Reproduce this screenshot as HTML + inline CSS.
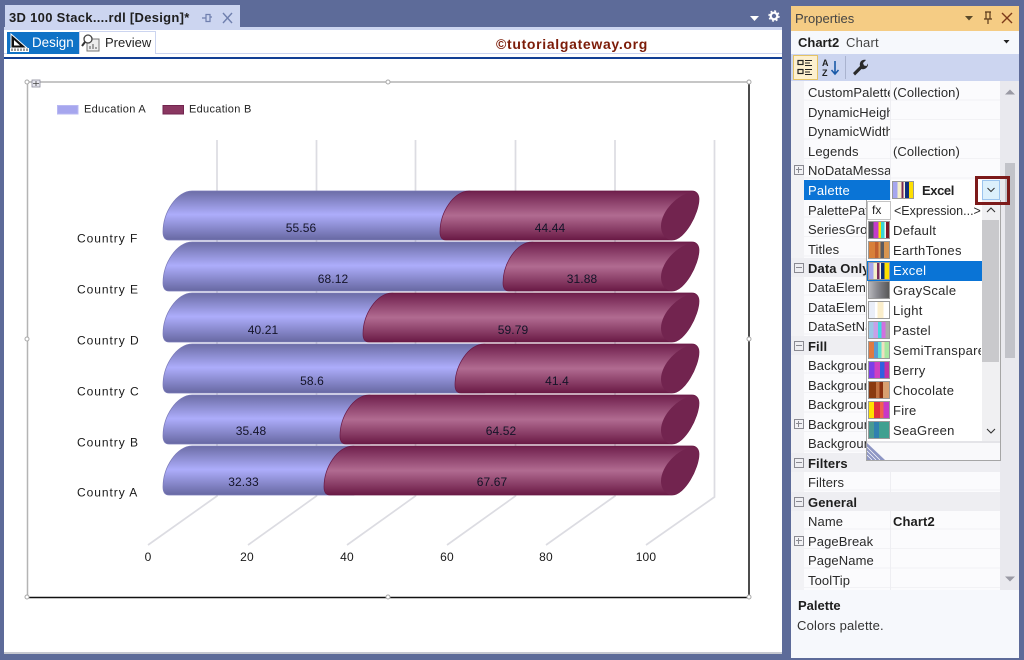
<!DOCTYPE html>
<html><head><meta charset="utf-8"><style>
html,body{margin:0;padding:0;width:1024px;height:660px;overflow:hidden;background:#5d6b99;font-family:"Liberation Sans",sans-serif;color:#1e1e1e}
div{position:absolute;box-sizing:border-box;white-space:nowrap;overflow:hidden}
svg{position:absolute;overflow:hidden}
.r{left:808px;width:82px;height:19px;font-size:13px;line-height:19px;letter-spacing:.1px;color:#2a2a2a}
.b{font-weight:bold;color:#1e1e1e}
.sec{left:791px;width:209px;height:19px;background:#eeeef2}
.pm{left:794px;width:10px;height:10px;border:1px solid #8a8a92}
.pm:before{content:"";position:absolute;left:1px;right:1px;top:3px;height:1px;background:#8a8a92}
.pl:after{content:"";position:absolute;top:1px;bottom:1px;left:3px;width:1px;background:#8a8a92}
.sw{left:868px;width:22px;height:18px;border:1px solid #9a9a9a}
.it{left:893px;width:88px;height:20px;font-size:13px;line-height:20px;letter-spacing:.3px;color:#2a2a2a}
</style></head><body>

<!-- Document tab -->
<div style="left:5px;top:5px;width:235px;height:22px;background:#ccd5f0"></div>
<div style="left:9px;top:9px;width:185px;height:18px;font-size:13px;font-weight:bold;line-height:18px;letter-spacing:.3px;color:#1e1e1e">3D 100 Stack....rdl [Design]*</div>
<svg style="left:200px;top:10px" width="36" height="16" viewBox="0 0 36 16" fill="none" stroke="#6f7fae" stroke-width="1.2"><path d="M2 8H6M6 4.5H10V11.5H6ZM6 4.5V11.5M10 7H12"/><path d="M23 3L32 13M32 3L23 13" stroke-width="1.4"/></svg>

<!-- Top-right icons -->
<svg style="left:745px;top:8px" width="38" height="18" viewBox="0 0 38 18"><path d="M5 8H14L9.500 13Z" fill="#fff"/><circle cx="29" cy="8" r="3.300" fill="none" stroke="#fff" stroke-width="2.200"/><circle cx="29" cy="8" r="5" fill="none" stroke="#fff" stroke-width="1.400" stroke-dasharray="2 1.930"/></svg>

<!-- Document body -->
<div style="left:4px;top:27px;width:778px;height:627px;background:#fff;border-bottom:2px solid #c6c8d0"></div>
<div style="left:4px;top:27px;width:778px;height:3px;background:#ccd5f0"></div>
<div style="left:4px;top:53px;width:778px;height:1px;background:#ccd5f0"></div>
<div style="left:4px;top:57px;width:778px;height:2px;background:#123f94"></div>

<div style="left:7px;top:32px;width:72px;height:22px;background:#0f72c6"></div>
<svg style="left:9px;top:33px" width="22" height="20" viewBox="0 0 22 20"><path d="M2 1V15H18Z" fill="#111" stroke="#fff" stroke-width="1"/><path d="M5 7V12.500H11Z" fill="#fff"/><rect x="1" y="15" width="19" height="4" fill="#fff"/><path d="M3 15.500V18M6 15.500V18M9 15.500V18M12 15.500V18M15 15.500V18M18 15.500V18" stroke="#333" stroke-width="1"/></svg>
<div style="left:32px;top:33px;width:46px;height:20px;font-size:13.400px;line-height:20px;color:#fff">Design</div>
<div style="left:79px;top:31px;width:77px;height:23px;background:#fff;border:1px solid #ccd5f0;border-bottom:0"></div>
<svg style="left:81px;top:33px" width="20" height="20" viewBox="0 0 20 20"><rect x="6" y="6" width="12" height="12" fill="#eee" stroke="#777"/><path d="M9 16V13M12 16V11M15 16V14" stroke="#555"/><circle cx="7" cy="6" r="4" fill="#fff" stroke="#444" stroke-width="1.300"/><path d="M4 9L1 13" stroke="#333" stroke-width="2"/></svg>
<div style="left:105px;top:33px;width:50px;height:20px;font-size:13px;line-height:20px;color:#222">Preview</div>

<div style="left:496px;top:35px;width:160px;height:18px;font-size:14px;font-weight:bold;line-height:18px;letter-spacing:.68px;color:#7c1c08">©tutorialgateway.org</div>

<!-- Chart -->
<svg style="left:0;top:0" width="782" height="660" viewBox="0 0 782 660">
<defs>
<linearGradient id="bl" x1="0" y1="0" x2="0" y2="1"><stop offset="0" stop-color="#6c6da6"/><stop offset=".48" stop-color="#adadfb"/><stop offset="1" stop-color="#6768a2"/></linearGradient>
<linearGradient id="ma" x1="0" y1="0" x2="0" y2="1"><stop offset="0" stop-color="#6f1f4c"/><stop offset=".5" stop-color="#b16b91"/><stop offset="1" stop-color="#6a1a45"/></linearGradient>
<path id="cap" d="M692 1C678 3 661 20 661 35C661 43 666 49 672 49C685 49 699 22 699 8C699 3 696 1 692 1Z" fill="#72244f"/>
</defs>

<!-- frame -->
<path d="M27 82H749" stroke="#b4b4b4" stroke-width="1.500" fill="none"/>
<path d="M27.500 82V597" stroke="#b4b4b4" stroke-width="1.500" fill="none"/>
<path d="M749 82V597.500H28" stroke="#111" stroke-width="1.500" fill="none"/>
<g fill="#fff" stroke="#a8a8a8" stroke-width="1"><circle cx="27" cy="82" r="2"/><circle cx="388" cy="82" r="2"/><circle cx="749" cy="82" r="2"/><circle cx="27" cy="339" r="2"/><circle cx="749" cy="339" r="2"/><circle cx="27" cy="597" r="2"/><circle cx="388" cy="597" r="2"/><circle cx="749" cy="597" r="2"/></g>
<rect x="32" y="80" width="8" height="7" fill="#e6e6ee" stroke="#8a8a9a" stroke-width=".8"/><path d="M36 81V86M33 83.500H39" stroke="#444" stroke-width=".8"/>

<!-- legend -->
<rect x="57.500" y="105.500" width="20.500" height="8.500" fill="#a6a6ee" stroke="#b8b8f2"/>
<rect x="163" y="105.500" width="20.500" height="8.500" fill="#8a3761" stroke="#72244f"/>
<g font-family="Liberation Sans,sans-serif" font-size="11" fill="#222" letter-spacing=".3">
<text x="84" y="112.500">Education A</text>
<text x="189" y="112.500">Education B</text>
</g>

<!-- grid -->
<g stroke="#dcdce2" stroke-width="1.700" fill="none">
<path d="M217 140V496L148 545"/>
<path d="M316.500 140V496L248 545"/>
<path d="M415.500 140V496L347 545"/>
<path d="M515.500 140V496L447 545"/>
<path d="M615 140V496L546 545"/>
<path d="M714.500 140V497L646 545"/>
</g>

<!-- bars -->
<g stroke-width=".7">
<g transform="translate(0,191)"><path d="M169 49c-4 0-6-3-6-8c0-20 14-41 29-41H470V49Z" fill="url(#bl)" stroke="#7a7ab8"/><path d="M446 49c-4 0-6-3-6-8c0-20 14-41 29-41H692c4 0 7 3 7 8c0 14-14 41-27 41Z" fill="url(#ma)" stroke="#6a1a45"/><use href="#cap"/></g>
<g transform="translate(0,242)"><path d="M169 49c-4 0-6-3-6-8c0-20 14-41 29-41H533V49Z" fill="url(#bl)" stroke="#7a7ab8"/><path d="M509 49c-4 0-6-3-6-8c0-20 14-41 29-41H692c4 0 7 3 7 8c0 14-14 41-27 41Z" fill="url(#ma)" stroke="#6a1a45"/><use href="#cap"/></g>
<g transform="translate(0,293)"><path d="M169 49c-4 0-6-3-6-8c0-20 14-41 29-41H393V49Z" fill="url(#bl)" stroke="#7a7ab8"/><path d="M369 49c-4 0-6-3-6-8c0-20 14-41 29-41H692c4 0 7 3 7 8c0 14-14 41-27 41Z" fill="url(#ma)" stroke="#6a1a45"/><use href="#cap"/></g>
<g transform="translate(0,344)"><path d="M169 49c-4 0-6-3-6-8c0-20 14-41 29-41H485V49Z" fill="url(#bl)" stroke="#7a7ab8"/><path d="M461 49c-4 0-6-3-6-8c0-20 14-41 29-41H692c4 0 7 3 7 8c0 14-14 41-27 41Z" fill="url(#ma)" stroke="#6a1a45"/><use href="#cap"/></g>
<g transform="translate(0,395)"><path d="M169 49c-4 0-6-3-6-8c0-20 14-41 29-41H370V49Z" fill="url(#bl)" stroke="#7a7ab8"/><path d="M346 49c-4 0-6-3-6-8c0-20 14-41 29-41H692c4 0 7 3 7 8c0 14-14 41-27 41Z" fill="url(#ma)" stroke="#6a1a45"/><use href="#cap"/></g>
<g transform="translate(0,446)"><path d="M169 49c-4 0-6-3-6-8c0-20 14-41 29-41H354V49Z" fill="url(#bl)" stroke="#7a7ab8"/><path d="M330 49c-4 0-6-3-6-8c0-20 14-41 29-41H692c4 0 7 3 7 8c0 14-14 41-27 41Z" fill="url(#ma)" stroke="#6a1a45"/><use href="#cap"/></g>
</g>

<!-- data labels -->
<g font-family="Liberation Sans,sans-serif" font-size="12" fill="#141428" text-anchor="middle" letter-spacing=".1">
<text x="301" y="232">55.56</text><text x="550" y="232">44.44</text>
<text x="333" y="283">68.12</text><text x="582" y="283">31.88</text>
<text x="263" y="334">40.21</text><text x="513" y="334">59.79</text>
<text x="312" y="385">58.6</text><text x="557" y="385">41.4</text>
<text x="251" y="435">35.48</text><text x="501" y="435">64.52</text>
<text x="243.500" y="486">32.33</text><text x="492" y="486">67.67</text>
</g>
<g font-family="Liberation Sans,sans-serif" font-size="12" fill="#1a1a1a" letter-spacing=".95">
<text x="77" y="242.500">Country F</text>
<text x="77" y="293.500">Country E</text>
<text x="77" y="344.500">Country D</text>
<text x="77" y="395.500">Country C</text>
<text x="77" y="446.500">Country B</text>
<text x="77" y="496.500">Country A</text>
</g>
<g font-family="Liberation Sans,sans-serif" font-size="12" fill="#1a1a1a" text-anchor="middle" letter-spacing=".2">
<text x="148" y="561">0</text><text x="247" y="561">20</text><text x="347" y="561">40</text><text x="447" y="561">60</text><text x="546" y="561">80</text><text x="646" y="561">100</text>
</g>
</svg>

<!-- Properties panel -->
<div style="left:791px;top:6px;width:228px;height:652px;background:#f2f2f5"></div>
<div style="left:791px;top:6px;width:228px;height:25px;background:#f5cc84"></div>
<div style="left:795px;top:10px;width:90px;height:18px;font-size:13px;line-height:18px;color:#444">Properties</div>
<svg style="left:960px;top:10px" width="56" height="16" viewBox="0 0 56 16" fill="none"><path d="M5 6H13L9 10.500Z" fill="#5a4a2a"/><path d="M25 2H31M26 2V9H30V2M24 9H32M28 9V14" stroke="#5a3a1a" stroke-width="1.200"/><path d="M42 3L52 13M52 3L42 13" stroke="#7c3a1a" stroke-width="1.400"/></svg>
<div style="left:791px;top:31px;width:228px;height:23px;background:#f6f8fc"></div>
<div style="left:798px;top:33px;width:60px;height:19px;font-size:13px;font-weight:bold;line-height:19px;color:#1e1e1e">Chart2</div>
<div style="left:846px;top:33px;width:50px;height:19px;font-size:13px;line-height:19px;letter-spacing:.2px;color:#444">Chart</div>
<svg style="left:1002px;top:38px" width="10" height="8" viewBox="0 0 10 8"><path d="M1.500 2H7.500L4.500 5.500Z" fill="#222"/></svg>
<div style="left:791px;top:54px;width:228px;height:27px;background:#ccd5f0"></div>
<div style="left:793px;top:55px;width:25px;height:25px;background:#fdf0cf;border:1px solid #e5c365"></div>
<svg style="left:796px;top:58px" width="20" height="20" viewBox="0 0 20 20" fill="none" stroke="#222"><rect x="2" y="2.500" width="5" height="4" stroke-width="1.200"/><rect x="2" y="11.500" width="5" height="4" stroke-width="1.200"/><path d="M9 2.500H16M9 5H14M9 7.500H16M9 11.500H16M9 14H14M9 16.500H16" stroke-width="1"/></svg>
<svg style="left:821px;top:57px" width="22" height="21" viewBox="0 0 22 21" fill="none"><text x="1" y="9" font-family="Liberation Sans,sans-serif" font-size="9" font-weight="bold" fill="#222">A</text><text x="1" y="19" font-family="Liberation Sans,sans-serif" font-size="9" font-weight="bold" fill="#222">Z</text><path d="M14 4V17M10.500 13L14 17L17.500 13" stroke="#1a5aa8" stroke-width="1.600"/></svg>
<div style="left:845px;top:56px;width:1px;height:23px;background:#aab3cf"></div>
<svg style="left:851px;top:58px" width="18" height="19" viewBox="0 0 18 19"><path d="M2 15L9 8C8 4 11 1 15 2L12 5L13 7.500L15.500 8L17 5.500C17.500 9 14 12 10.500 11L4 17.500Z" fill="#2a2a2a"/></svg>

<!-- Grid -->
<div style="left:804px;top:81px;width:196px;height:509px;background:repeating-linear-gradient(180deg,#fbfbfd 0 18.500px,#f2f2f5 18.500px 19.500px)"></div>
<div style="left:1000px;top:81px;width:19px;height:509px;background:#e9e9ee"></div>
<div style="left:1005px;top:163px;width:10px;height:195px;background:#c2c3c9"></div>
<svg style="left:1003px;top:86px" width="14" height="12" viewBox="0 0 14 12"><path d="M2 8.500H12L7 3.500Z" fill="#9a9aa4"/></svg>
<svg style="left:1003px;top:573px" width="14" height="12" viewBox="0 0 14 12"><path d="M2 3.500H12L7 8.500Z" fill="#9a9aa4"/></svg>
<div style="left:890px;top:81px;width:1px;height:509px;background:#eeeef2"></div>

<div class="sec" style="top:258px"></div><div class="sec" style="top:336px"></div><div class="sec" style="top:453px"></div><div class="sec" style="top:492px"></div>

<div class="r" style="top:83px">CustomPalette</div>
<div class="r" style="top:102.500px">DynamicHeight</div>
<div class="r" style="top:122px">DynamicWidth</div>
<div class="r" style="top:141.500px">Legends</div>
<div class="r" style="top:161px">NoDataMessage</div>
<div class="r" style="top:200.500px">PalettePattern</div>
<div class="r" style="top:220px">SeriesGroups</div>
<div class="r" style="top:239.500px">Titles</div>
<div class="r b" style="top:258.500px">Data Only</div>
<div class="r" style="top:278px">DataElement</div>
<div class="r" style="top:297.500px">DataElement</div>
<div class="r" style="top:317px">DataSetName</div>
<div class="r b" style="top:336.500px">Fill</div>
<div class="r" style="top:356px">Background</div>
<div class="r" style="top:375.500px">Background</div>
<div class="r" style="top:395px">Background</div>
<div class="r" style="top:414.500px">Background</div>
<div class="r" style="top:434px">Background</div>
<div class="r b" style="top:453.500px">Filters</div>
<div class="r" style="top:473px">Filters</div>
<div class="r b" style="top:492.500px">General</div>
<div class="r" style="top:512px">Name</div>
<div class="r" style="top:531.500px">PageBreak</div>
<div class="r" style="top:551px">PageName</div>
<div class="r" style="top:570.500px">ToolTip</div>

<div class="r" style="left:893px;width:100px;top:83px">(Collection)</div>
<div class="r" style="left:893px;width:100px;top:141.500px">(Collection)</div>
<div class="r b" style="left:893px;width:100px;top:512px">Chart2</div>

<div class="pm pl" style="top:165px"></div>
<div class="pm" style="top:263px"></div>
<div class="pm" style="top:341px"></div>
<div class="pm pl" style="top:419px"></div>
<div class="pm" style="top:458px"></div>
<div class="pm" style="top:497px"></div>
<div class="pm pl" style="top:536px"></div>

<!-- Palette selected row -->
<div style="left:804px;top:180px;width:86px;height:20px;background:#0a74d6"></div>
<div style="left:808px;top:181px;width:70px;height:19px;font-size:13px;line-height:19px;letter-spacing:.2px;color:#fff">Palette</div>
<div style="left:891px;top:180px;width:109px;height:20px;background:#fff"></div>
<div style="left:892px;top:181px;width:22px;height:18px;border:1px solid #999;background:linear-gradient(90deg,#a6a6ee 0 22%,#f5f0c8 22% 42%,#7c2a58 42% 52%,#f5f5e0 52% 60%,#10307c 60% 80%,#ffe000 80%)"></div>
<div style="left:922px;top:181px;width:50px;height:19px;font-size:13px;font-weight:bold;line-height:19px;letter-spacing:-.4px;color:#222">Excel</div>
<div style="left:982px;top:180px;width:18px;height:20px;background:#dcf0fc;border:1px solid #9cc4ee"></div>
<svg style="left:986px;top:186px" width="10" height="8" viewBox="0 0 10 8" fill="none"><path d="M1.500 2L5 5.500L8.500 2" stroke="#333" stroke-width="1"/></svg>

<!-- Dropdown -->
<div style="left:866px;top:200px;width:135px;height:261px;background:#f9f9fb;border:1px solid #a6a6a6;border-top:0"></div>
<div style="left:867px;top:200px;width:115px;height:241px;background:#fff"></div>
<div style="left:982px;top:200px;width:18px;height:241px;background:#f0f0f2"></div>
<div style="left:982px;top:220px;width:17px;height:142px;background:#c9c9cc"></div>
<svg style="left:985px;top:205px" width="12" height="10" viewBox="0 0 12 10" fill="none"><path d="M2 7L6 3L10 7" stroke="#333" stroke-width="1.100"/></svg>
<svg style="left:985px;top:426px" width="12" height="10" viewBox="0 0 12 10" fill="none"><path d="M2 3L6 7L10 3" stroke="#333" stroke-width="1.100"/></svg>
<div style="left:867px;top:441px;width:133px;height:2px;background:#e4e4e8"></div>
<svg style="left:867px;top:443px" width="19" height="17" viewBox="0 0 19 17"><path d="M0 0L18 17H0Z" fill="#8e96c4"/><path d="M0 4L13 17M0 8L9 17M0 12L5 17" stroke="#fff" stroke-width=".7"/></svg>

<div style="left:867px;top:201px;width:24px;height:19px;background:#fff;border:1px solid #c4c4c4;font-size:12px;line-height:17px;padding-left:4px;color:#222">fx</div>
<div class="it" style="top:201px;left:894px;font-size:12.500px;letter-spacing:0">&lt;Expression...&gt;</div>

<div style="left:867px;top:260.500px;width:115px;height:20px;background:#0a74d6"></div>

<div class="sw" style="top:221px;background:linear-gradient(90deg,#505058 0 22%,#c33bc9 22% 48%,#ffe000 48% 60%,#35d7d7 60% 78%,#f4f4f4 78% 86%,#7a1a2a 86%)"></div>
<div class="sw" style="top:241px;background:linear-gradient(90deg,#d8803a 0 30%,#c06030 30% 48%,#e09a50 48% 58%,#5a5a60 58% 76%,#d89550 76%)"></div>
<div class="sw" style="top:261.500px;background:linear-gradient(90deg,#a6a6ee 0 22%,#f5f0c8 22% 40%,#7c2a58 40% 52%,#f5f5e0 52% 60%,#10307c 60% 78%,#ffe000 78%)"></div>
<div class="sw" style="top:281px;background:linear-gradient(90deg,#b8b8bc 0,#8a8a90 40%,#707074 70%,#585858 100%)"></div>
<div class="sw" style="top:301px;background:linear-gradient(90deg,#eaeef8 0 30%,#fff 30% 42%,#fbeecb 42% 72%,#fff 72%)"></div>
<div class="sw" style="top:321px;background:linear-gradient(90deg,#9cc8e6 0 22%,#c8a0e8 22% 46%,#40d8e0 46% 62%,#d070e0 62% 82%,#aaa 82%)"></div>
<div class="sw" style="top:341px;background:linear-gradient(90deg,#e07a40 0 26%,#5a9ad0 26% 44%,#60e0d0 44% 62%,#f0e0c0 62% 78%,#a8e8a0 78%)"></div>
<div class="sw" style="top:361px;background:linear-gradient(90deg,#7a40e8 0 28%,#d040c0 28% 54%,#3060e0 54% 78%,#c030a8 78%)"></div>
<div class="sw" style="top:381px;background:linear-gradient(90deg,#8a3a10 0 34%,#c07040 34% 52%,#8a3010 52% 70%,#d8a070 70%)"></div>
<div class="sw" style="top:401px;background:linear-gradient(90deg,#ffe000 0 26%,#e03040 26% 54%,#f06050 54% 72%,#c838c8 72%)"></div>
<div class="sw" style="top:421px;background:linear-gradient(90deg,#4a9a90 0 26%,#3080b0 26% 50%,#40a090 50%)"></div>

<div class="it" style="top:221px">Default</div>
<div class="it" style="top:241px">EarthTones</div>
<div class="it" style="top:261px;color:#fff">Excel</div>
<div class="it" style="top:281px">GrayScale</div>
<div class="it" style="top:301px">Light</div>
<div class="it" style="top:321px">Pastel</div>
<div class="it" style="top:341px">SemiTransparent</div>
<div class="it" style="top:361px">Berry</div>
<div class="it" style="top:381px">Chocolate</div>
<div class="it" style="top:401px">Fire</div>
<div class="it" style="top:421px">SeaGreen</div>

<!-- Red highlight -->
<div style="left:975px;top:176px;width:35px;height:29px;border:3px solid #7c1a1a"></div>

<!-- Description -->
<div style="left:791px;top:590px;width:228px;height:68px;background:#f6f8fc"></div>
<div style="left:798px;top:597px;width:100px;height:18px;font-size:13px;font-weight:bold;line-height:18px;color:#1e1e1e">Palette</div>
<div style="left:797px;top:617px;width:150px;height:18px;font-size:13px;line-height:18px;letter-spacing:.2px;color:#333">Colors palette.</div>

</body></html>
